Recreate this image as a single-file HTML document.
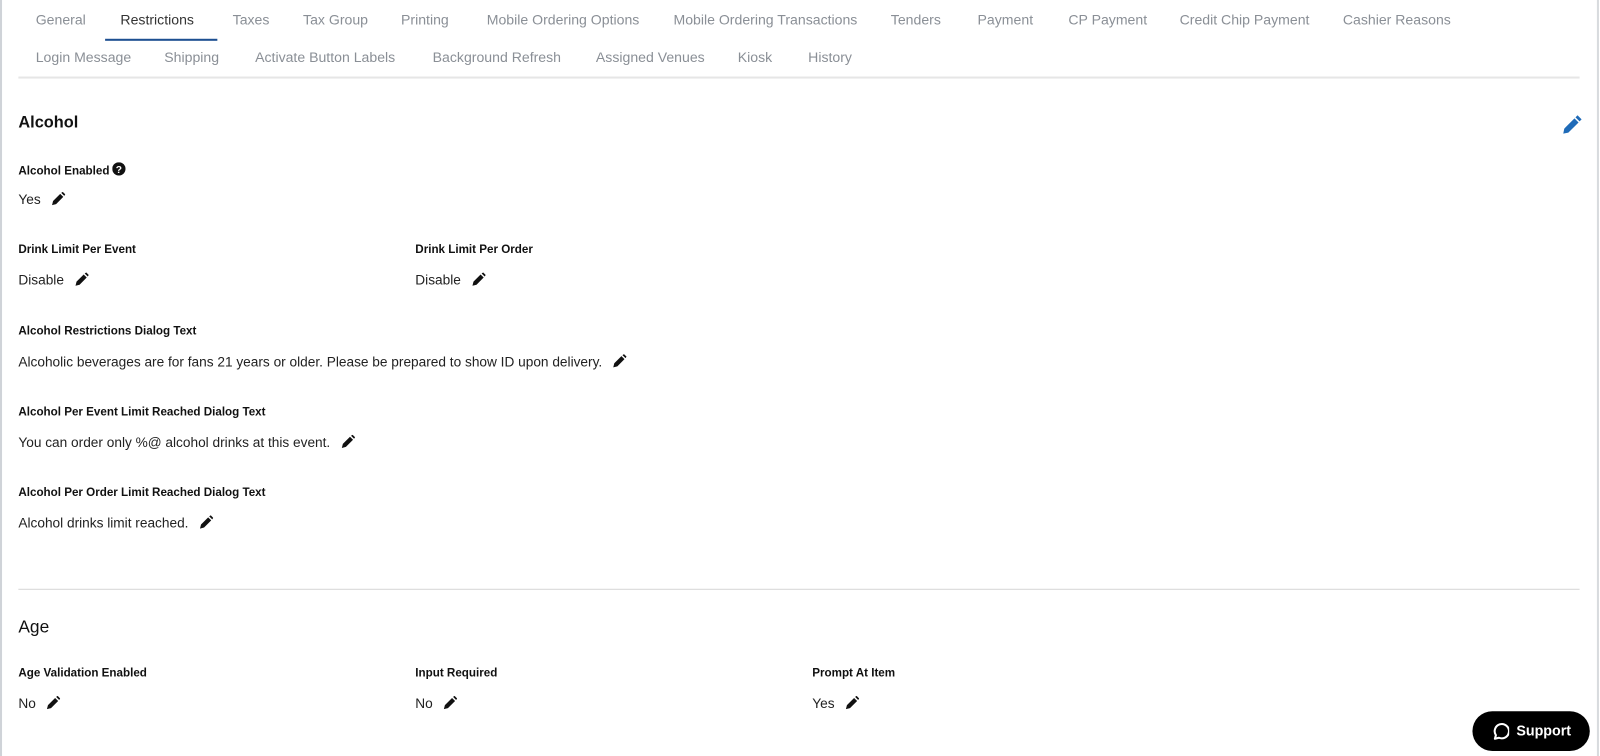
<!DOCTYPE html>
<html><head><style>
body{margin:0;width:1600px;height:756px;background:#fff;font-family:"Liberation Sans",sans-serif;position:relative;overflow:hidden;color:#111}
#w{position:absolute;left:0;top:0;width:1568px;height:741px;transform:scale(1.0204);transform-origin:0 0}
.lb{position:absolute;left:0;top:0;width:2px;height:741px;background:#cfd3d8}
.rb{position:absolute;left:1565px;top:0;width:2px;height:741px;background:#d8dbde}
.t{position:absolute;font-size:13.8px;color:#8a8f96;white-space:nowrap}
.h{position:absolute;font-size:16px;font-weight:bold;color:#111}
.l{position:absolute;font-size:11.4px;font-weight:bold;color:#111;white-space:nowrap;margin-top:1.5px}
.v{position:absolute;font-size:13.4px;color:#222;white-space:nowrap;margin-top:1px}
.p{display:inline-block;vertical-align:-2px;margin-left:10px}
.hr{position:absolute;height:1px;background:#ddd}
</style></head><body><div id="w">
<div class="lb"></div><div class="rb"></div>
<div class="t" style="left:35px;top:12px">General</div>
<div class="t" style="left:118px;top:12px;color:#333">Restrictions</div>
<div style="position:absolute;left:103px;top:38px;width:110px;height:2px;background:#1d4f91"></div>
<div class="t" style="left:228px;top:12px">Taxes</div>
<div class="t" style="left:297px;top:12px">Tax Group</div>
<div class="t" style="left:393px;top:12px">Printing</div>
<div class="t" style="left:477px;top:12px">Mobile Ordering Options</div>
<div class="t" style="left:660px;top:12px">Mobile Ordering Transactions</div>
<div class="t" style="left:873px;top:12px">Tenders</div>
<div class="t" style="left:958px;top:12px">Payment</div>
<div class="t" style="left:1047px;top:12px">CP Payment</div>
<div class="t" style="left:1156px;top:12px">Credit Chip Payment</div>
<div class="t" style="left:1316px;top:12px">Cashier Reasons</div>
<div class="t" style="left:35px;top:49px">Login Message</div>
<div class="t" style="left:161px;top:49px">Shipping</div>
<div class="t" style="left:250px;top:49px">Activate Button Labels</div>
<div class="t" style="left:424px;top:49px">Background Refresh</div>
<div class="t" style="left:584px;top:49px">Assigned Venues</div>
<div class="t" style="left:723px;top:49px">Kiosk</div>
<div class="t" style="left:792px;top:49px">History</div>
<div class="hr" style="left:18px;top:75px;width:1530px;background:#e6e6e6;height:2px"></div>

<svg style="position:absolute;left:1530px;top:113px" width="20" height="20" viewBox="0 0 20 20"><path d="M2 18l1-5 10-10 4 4-10 10z M14 2l2-2 4 4-2 2z" fill="#1f6bb8"/></svg>

<div class="h" style="left:18px;top:112px">Alcohol</div>
<div class="l" style="left:18px;top:157px">Alcohol Enabled <svg width="13" height="13" viewBox="0 0 13 13" style="vertical-align:-1px"><circle cx="6.5" cy="6.5" r="6.5" fill="#111"/><text x="6.5" y="10.5" font-size="10" font-weight="bold" fill="#fff" text-anchor="middle" font-family="Liberation Sans">?</text></svg></div>
<div class="v" style="left:18px;top:187px">Yes<svg class="p" width="14" height="14" viewBox="0 0 14 14"><path d="M1 13l1-4 7-7 3 3-7 7z M10 1l1.5-1 2.5 2.5-1 1.5z" fill="#111"/></svg></div>

<div class="l" style="left:18px;top:237px">Drink Limit Per Event</div>
<div class="v" style="left:18px;top:266px">Disable<svg class="p" width="14" height="14" viewBox="0 0 14 14"><path d="M1 13l1-4 7-7 3 3-7 7z M10 1l1.5-1 2.5 2.5-1 1.5z" fill="#111"/></svg></div>
<div class="l" style="left:407px;top:237px">Drink Limit Per Order</div>
<div class="v" style="left:407px;top:266px">Disable<svg class="p" width="14" height="14" viewBox="0 0 14 14"><path d="M1 13l1-4 7-7 3 3-7 7z M10 1l1.5-1 2.5 2.5-1 1.5z" fill="#111"/></svg></div>

<div class="l" style="left:18px;top:317px">Alcohol Restrictions Dialog Text</div>
<div class="v" style="left:18px;top:346px">Alcoholic beverages are for fans 21 years or older. Please be prepared to show ID upon delivery.<svg class="p" width="14" height="14" viewBox="0 0 14 14"><path d="M1 13l1-4 7-7 3 3-7 7z M10 1l1.5-1 2.5 2.5-1 1.5z" fill="#111"/></svg></div>

<div class="l" style="left:18px;top:396px">Alcohol Per Event Limit Reached Dialog Text</div>
<div class="v" style="left:18px;top:425px">You can order only %@ alcohol drinks at this event.<svg class="p" width="14" height="14" viewBox="0 0 14 14"><path d="M1 13l1-4 7-7 3 3-7 7z M10 1l1.5-1 2.5 2.5-1 1.5z" fill="#111"/></svg></div>

<div class="l" style="left:18px;top:475px">Alcohol Per Order Limit Reached Dialog Text</div>
<div class="v" style="left:18px;top:504px">Alcohol drinks limit reached.<svg class="p" width="14" height="14" viewBox="0 0 14 14"><path d="M1 13l1-4 7-7 3 3-7 7z M10 1l1.5-1 2.5 2.5-1 1.5z" fill="#111"/></svg></div>

<div class="hr" style="left:18px;top:577px;width:1530px;background:#d6d6d6"></div>

<div class="h" style="left:18px;top:605px;font-weight:normal;font-size:17px">Age</div>
<div class="l" style="left:18px;top:652px">Age Validation Enabled</div>
<div class="v" style="left:18px;top:681px">No<svg class="p" width="14" height="14" viewBox="0 0 14 14"><path d="M1 13l1-4 7-7 3 3-7 7z M10 1l1.5-1 2.5 2.5-1 1.5z" fill="#111"/></svg></div>
<div class="l" style="left:407px;top:652px">Input Required</div>
<div class="v" style="left:407px;top:681px">No<svg class="p" width="14" height="14" viewBox="0 0 14 14"><path d="M1 13l1-4 7-7 3 3-7 7z M10 1l1.5-1 2.5 2.5-1 1.5z" fill="#111"/></svg></div>
<div class="l" style="left:796px;top:652px">Prompt At Item</div>
<div class="v" style="left:796px;top:681px">Yes<svg class="p" width="14" height="14" viewBox="0 0 14 14"><path d="M1 13l1-4 7-7 3 3-7 7z M10 1l1.5-1 2.5 2.5-1 1.5z" fill="#111"/></svg></div>

<div style="position:absolute;left:1443px;top:697px;width:115px;height:39px;background:#000;border-radius:20px;color:#fff;font-weight:bold;font-size:14px;line-height:39px">
<svg style="position:absolute;left:18px;top:11px" width="18" height="18" viewBox="0 0 18 18"><path d="M4 16l1-3.5A7 7 0 1 1 8 15z" fill="none" stroke="#fff" stroke-width="2" stroke-linejoin="round"/></svg>
<span style="position:absolute;left:43px">Support</span></div>
</div></body></html>
